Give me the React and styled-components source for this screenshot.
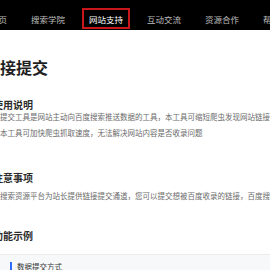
import React from "react";
import { styled, createGlobalStyle } from "styled-components";

const GlobalStyle = createGlobalStyle`
  body {
    margin: 0;
    background: #fff;
    overflow: hidden;
    font-family: "Noto Sans CJK SC", "Noto Sans", sans-serif;
  }
`;

const navItems = ["首页", "搜索学院", "网站支持", "互动交流", "资源合作", "帮助中心"];

const App = () => {
  return (
    <Page>
      <GlobalStyle />
      <NavBar>
        <NavList>
          {navItems.map((item) => (
            <NavItem key={item} $active={item === "网站支持"}>
              {item}
            </NavItem>
          ))}
        </NavList>
      </NavBar>

      <Content>
        <Title>链接提交</Title>

        <SectionHeading $top={22}>使用说明</SectionHeading>
        <Para $top={-2}>
          <Line>链接提交工具是网站主动向百度搜索推送数据的工具，本工具可缩短爬虫发现网站链接时间</Line>
          <Line>据。本工具可加快爬虫抓取速度，无法解决网站内容是否收录问题</Line>
        </Para>

        <SectionHeading $top={31}>注意事项</SectionHeading>
        <Para $top={4}>
          <Line>百度搜索资源平台为站长提供链接提交通道，您可以提交想被百度收录的链接，百度搜索会按照标准处理</Line>
        </Para>

        <SectionHeading $top={26}>功能示例</SectionHeading>
        <ExampleBox>
          <ExampleTitle>数据提交方式</ExampleTitle>
        </ExampleBox>
      </Content>
    </Page>
  );
};

export default App;

const Page = styled.div`
  width: 270px;
  height: 270px;
  overflow: hidden;
`;

const NavBar = styled.div`
  height: 30px;
  background: #000;
  display: flex;
  align-items: flex-end;
  overflow: hidden;
`;

const NavList = styled.div`
  display: flex;
  align-items: center;
  gap: 10px;
  margin-left: -17px;
  padding-bottom: 1px;
  white-space: nowrap;
`;

const NavItem = styled.div`
  height: 21px;
  box-sizing: border-box;
  padding: 0 5px;
  display: flex;
  align-items: center;
  font-size: 8.5px;
  color: ${(p) => (p.$active ? "#fff" : "#bdbdbd")};
  border: 2px solid ${(p) => (p.$active ? "#c8161d" : "transparent")};
`;

const Content = styled.div`
  margin-left: -16px;
  white-space: nowrap;
`;

const Title = styled.h1`
  margin: 27px 0 0;
  font-size: 16px;
  line-height: 20px;
  font-weight: 700;
  color: #1f1f1f;
`;

const SectionHeading = styled.h2`
  margin: ${(p) => p.$top}px 0 0;
  padding-left: 9px;
  font-size: 10px;
  line-height: 12px;
  font-weight: 700;
  color: #2b2b2b;
`;

const Para = styled.div`
  margin-top: ${(p) => p.$top}px;
  padding-left: 1px;
  font-size: 7.5px;
  line-height: 16px;
  color: #6b6b6b;
`;

const Line = styled.div``;

const ExampleBox = styled.div`
  margin-top: 12px;
  height: 40px;
  background: #f7f8fa;
  border-top: 1px solid #ececec;
  padding: 7px 0 0 26px;
`;

const ExampleTitle = styled.div`
  display: flex;
  align-items: center;
  gap: 5px;
  font-size: 7.5px;
  line-height: 10px;
  color: #333;

  &::before {
    content: "";
    width: 2px;
    height: 10px;
    background: #2f6bff;
  }
`;
